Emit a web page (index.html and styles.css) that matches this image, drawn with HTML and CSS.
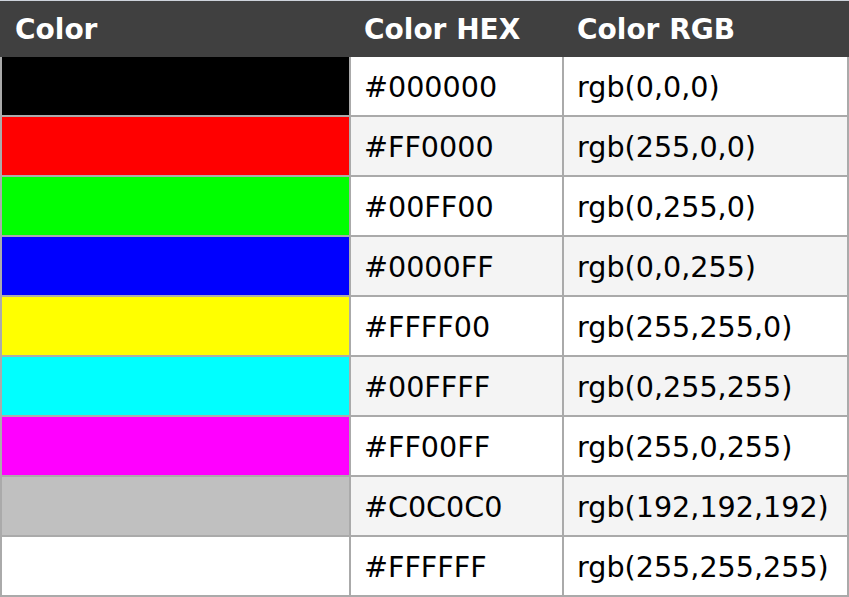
FILE: index.html
```html
<!DOCTYPE html>
<html>
<head>
<meta charset="utf-8">
<link rel="stylesheet" href="styles.css">
</head>
<body>
<div class="topline"></div>
<table class="colors">
  <thead>
    <tr><th class="c1">Color</th><th class="c2">Color HEX</th><th class="c3">Color RGB</th></tr>
  </thead>
  <tbody>
    <tr><td class="sw black"></td><td>#000000</td><td>rgb(0,0,0)</td></tr>
    <tr><td class="sw red"></td><td>#FF0000</td><td>rgb(255,0,0)</td></tr>
    <tr><td class="sw lime"></td><td>#00FF00</td><td>rgb(0,255,0)</td></tr>
    <tr><td class="sw blue"></td><td>#0000FF</td><td>rgb(0,0,255)</td></tr>
    <tr><td class="sw yellow"></td><td>#FFFF00</td><td>rgb(255,255,0)</td></tr>
    <tr><td class="sw cyan"></td><td>#00FFFF</td><td>rgb(0,255,255)</td></tr>
    <tr><td class="sw magenta"></td><td>#FF00FF</td><td>rgb(255,0,255)</td></tr>
    <tr><td class="sw silver"></td><td>#C0C0C0</td><td>rgb(192,192,192)</td></tr>
    <tr><td class="sw white"></td><td>#FFFFFF</td><td>rgb(255,255,255)</td></tr>
  </tbody>
</table>
</body>
</html>
```
FILE: styles.css
```css
html, body {
  margin: 0;
  padding: 0;
  background: #ffffff;
}
body {
  font-family: "DejaVu Sans", Verdana, sans-serif;
  font-size: 28px;
  color: #000;
  overflow: hidden;
}
.topline {
  height: 1px;
  background: #cdd3db;
}
.colors {
  width: 849px;
  border-collapse: separate;
  border-spacing: 0;
  table-layout: fixed;
}
.colors th {
  background: #404040;
  color: #fff;
  font-weight: bold;
  text-align: left;
  height: 56px;
  padding: 0 13px;
  box-sizing: border-box;
}
.colors th.c1 { width: 351px; padding-left: 15px; }
.colors th.c2 { width: 213px; }
.colors th.c3 { width: 285px; }
.colors td {
  height: 56px;
  padding: 2px 13px 0 13px;
  box-sizing: content-box;
  font-size: 28.6px;
  border-right: 2px solid #aaaaaa;
  border-bottom: 2px solid #aaaaaa;
  white-space: nowrap;
}
.colors td:first-child {
  border-left: 2px solid #aaaaaa;
}
.colors tbody tr:nth-child(even) td {
  background: #f4f4f4;
}
.colors tbody tr td.sw { padding: 2px 0 0 0; }
.colors tbody tr td.black { background: #000000; }
.colors tbody tr td.red { background: #ff0000; }
.colors tbody tr td.lime { background: #00ff00; }
.colors tbody tr td.blue { background: #0000ff; }
.colors tbody tr td.yellow { background: #ffff00; }
.colors tbody tr td.cyan { background: #00ffff; }
.colors tbody tr td.magenta { background: #ff00ff; }
.colors tbody tr td.silver { background: #c0c0c0; }
.colors tbody tr td.white { background: #ffffff; }
```
